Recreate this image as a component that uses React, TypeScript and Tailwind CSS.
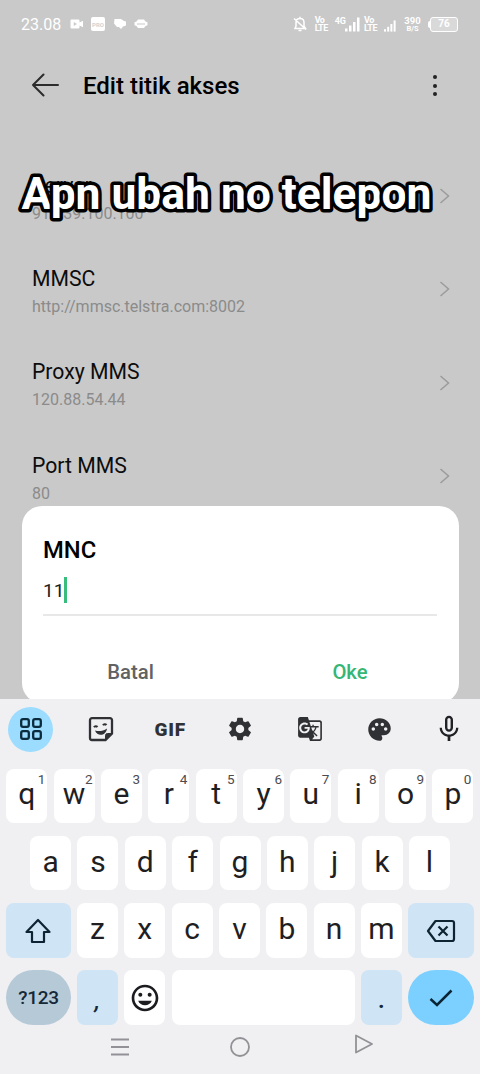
import type { ReactNode } from "react";
import {
  MdGTranslate,
  MdInsertEmoticon,
  MdMicNone,
  MdPalette,
  MdSettings,
} from "react-icons/md";

const settings = [
  { title: "Server", value: "91.139.100.100" },
  { title: "MMSC", value: "http://mmsc.telstra.com:8002" },
  { title: "Proxy MMS", value: "120.88.54.44" },
  { title: "Port MMS", value: "80" },
];

const topRow = ["q", "w", "e", "r", "t", "y", "u", "i", "o", "p"];
const middleRow = ["a", "s", "d", "f", "g", "h", "j", "k", "l"];
const bottomRow = ["z", "x", "c", "v", "b", "n", "m"];

const Signal = ({ className }: { className: string }) => (
  <svg viewBox="0 0 15 15" fill="currentColor" className={className}>
    <rect x="0" y="11.5" width="2.500" height="3" />
    <rect x="4" y="8.5" width="2.500" height="6" />
    <rect x="8" y="5" width="2.500" height="9.5" />
    <rect x="12" y="0.5" width="2.500" height="14" />
  </svg>
);

const VoLte = ({ className }: { className: string }) => (
  <span className={`w-[14px] text-[9px] font-bold leading-[8px] tracking-[-0.5px] ${className}`}>
    Vo
    <br />
    LTE
  </span>
);

const StatusBar = () => (
  <div className="flex h-12 items-center pl-[21px] pr-[22px] text-white">
    <span className="w-[49px] pt-[2px] text-[16px] leading-none">23.08</span>
    <svg viewBox="0 0 14 10" className="h-[10px] w-[14px]" fill="currentColor">
      <path d="M1.5 .5h7a1 1 0 0 1 1 1v2L13 1.8v6.4L9.500 6.500v2a1 1 0 0 1-1 1h-7a1 1 0 0 1-1-1v-7a1 1 0 0 1 1-1z" />
      <path d="M3.800 3v4l3-2z" fill="#c9c9c9" />
    </svg>
    <span className="ml-[7px] flex h-[14px] w-[14px] items-center justify-center rounded-[2px] bg-white text-[6px] font-bold text-[#d2d2d2]">
      PRO
    </span>
    <svg viewBox="0 0 14 12" className="ml-2 h-3 w-[14px]" fill="currentColor">
      <path d="M1.500 1H8l3 2 2 .5v4L10 8.500 8 11 6 9H4L1 5.500z" />
    </svg>
    <svg viewBox="0 0 14 12" className="ml-[7px] h-3 w-[14px]">
      <path d="M4 1.500h6l1.500 2 2 .8v3l-2 .8-1.500 2H4l-1.500-2-2-.8v-3l2-.8z" fill="currentColor" />
      <path d="M3 6h8" stroke="#c9c9c9" />
    </svg>

    <svg viewBox="0 0 14 16" className="ml-auto h-4 w-[14px]" fill="none" stroke="currentColor" strokeWidth="1.500">
      <path d="M2 12.500h10.500L11 10V6.500C11 4 9.500 2.500 7 2.500S3 4 3 6.500V10zM7 .8v1.700M5.500 14.500h3M1 2.500l12 11" />
    </svg>
    <VoLte className="ml-[8px]" />
    <span className="ml-[6px] self-start pt-[17px] text-[9px] font-bold leading-[8px]">4G</span>
    <Signal className="-ml-px h-[15px] w-[15px]" />
    <VoLte className="ml-[4px]" />
    <Signal className="ml-[6px] mt-[4px] h-[12px] w-[12px]" />
    <span className="ml-[8px] w-[17px] text-center text-[9.500px] font-bold leading-[8px]">
      390
      <span className="block text-[7.500px] leading-[7px]">B/S</span>
    </span>
    <div className="ml-[7px] flex items-center">
      <span className="h-[7px] w-[2px] rounded-l-sm bg-white" />
      <span className="flex h-[15px] w-[28px] items-center justify-center rounded-[3px] border border-white bg-white/30 text-[10px] font-bold leading-none">
        76
      </span>
    </div>
  </div>
);

const Header = () => (
  <div className="flex h-[76px] items-center pl-8 pr-[43.500px]">
    <svg viewBox="0 0 28 24" className="-mt-[2px] h-6 w-7" fill="none" stroke="#2c2c2c" strokeWidth="2" strokeLinecap="round" strokeLinejoin="round">
      <path d="M11.500 1.500L1 12l10.500 10.500M1 12h25" />
    </svg>
    <h1 className="ml-[23px] text-[24px] font-medium leading-none text-black">Edit titik akses</h1>
    <div className="ml-auto flex flex-col gap-[4.500px] pb-px">
      <span className="h-1 w-1 rounded-full bg-[#222]" />
      <span className="h-1 w-1 rounded-full bg-[#222]" />
      <span className="h-1 w-1 rounded-full bg-[#222]" />
    </div>
  </div>
);

const SettingsList = () => (
  <div className="pt-[25.500px]">
    {settings.map((item) => (
      <div key={item.title} className="flex h-[93.300px] items-center justify-between pl-8 pr-[29px]">
        <div className="pt-[7px]">
          <p className="text-[21.200px] leading-[28px] text-[#0c0c0c]">{item.title}</p>
          <p className="text-[16px] leading-[28px] text-[#8b8b8b]">{item.value}</p>
        </div>
        <svg viewBox="0 0 12 16" className="h-4 w-3" fill="none" stroke="#9b9b9b" strokeWidth="1.500">
          <path d="M1.500 1l8 7-8 7" />
        </svg>
      </div>
    ))}
  </div>
);

const Dialog = () => (
  <div className="absolute left-[21.500px] top-[505.500px] h-[197px] w-[437px] rounded-[20px] bg-white px-[21.500px] pt-[28px]">
    <h2 className="text-[23.800px] font-medium leading-[32px] text-black">MNC</h2>
    <div className="mt-[8px] flex h-[42px] items-start border-b-2 border-[#e8e8e8]">
      <span className="pt-[5px] text-[19px] leading-[24px] text-[#1c1c1c]">11</span>
      <span className="mt-[3px] h-[26px] w-[3px] bg-[#39bd7c]" />
    </div>
    <div className="flex pt-[42px] text-[20.300px] font-medium leading-[28px]">
      <button className="w-[175px] text-center text-[#626262]">Batal</button>
      <button className="ml-auto w-[174px] text-center text-[#35b675]">Oke</button>
    </div>
  </div>
);

const Caption = () => (
  <svg className="absolute left-0 top-[160px] h-[64px] w-[480px]">
    <text
      x="21.5"
      y="49"
      textLength="410"
      fill="white"
      stroke="black"
      strokeWidth="7"
      strokeLinejoin="round"
      className="font-['Roboto',sans-serif] text-[44.500px] font-bold [paint-order:stroke]"
    >
      Apn ubah no telepon
    </text>
  </svg>
);

const Toolbar = () => (
  <div className="flex h-[60px] items-center justify-between px-2 text-[#303134]">
    <span className="flex h-[45px] w-[45px] items-center justify-center rounded-full bg-[#9bdcff]">
      <svg viewBox="0 0 24 24" className="h-6 w-6" fill="none" stroke="#0b2a3c" strokeWidth="2.300">
        <rect x="2.200" y="2.200" width="7.600" height="7.600" rx="1.800" />
        <rect x="14.200" y="2.200" width="7.600" height="7.600" rx="1.800" />
        <rect x="2.200" y="14.200" width="7.600" height="7.600" rx="1.800" />
        <rect x="14.200" y="14.200" width="7.600" height="7.600" rx="1.800" />
      </svg>
    </span>
    <span className="flex w-[45px] justify-center pl-[2px]">
      <svg viewBox="0 0 26 26" className="h-[26px] w-[26px]" fill="none" stroke="currentColor" strokeWidth="2.300">
        <path d="M4 2.200h18a2 2 0 0 1 2 2v13.300l-6.500 6.500H4a2 2 0 0 1-2-2V4.200a2 2 0 0 1 2-2z" />
        <path d="M17.500 24v-4.500a2 2 0 0 1 2-2H24z" fill="currentColor" strokeWidth="1" />
        <path d="M7 14.500c4 1.200 8 .7 12-2-1 7.500-9.500 8.500-12 2z" fill="currentColor" stroke="none" />
        <path d="M6 11.300c.8-1.500 2.500-1.500 3.500-.3M15 9.300c.8-1.500 2.500-1.500 3.500-.3" strokeWidth="2" />
      </svg>
    </span>
    <span className="flex w-[45px] justify-center text-[19px] font-black leading-none tracking-[0.8px]">GIF</span>
    <span className="flex w-[45px] justify-center">
      <MdSettings className="h-[28px] w-[28px]" />
    </span>
    <span className="flex w-[45px] justify-center">
      <MdGTranslate className="h-[26px] w-[26px]" />
    </span>
    <span className="flex w-[45px] justify-center">
      <MdPalette className="h-[27px] w-[27px]" />
    </span>
    <span className="flex w-[45px] justify-center">
      <MdMicNone className="h-8 w-8 text-[#202124]" />
    </span>
  </div>
);

type KeyProps = {
  children?: ReactNode;
  hint?: number;
  className?: string;
};

const Key = ({ children, hint, className = "w-[41px] bg-white text-[30px] text-[#1f1f23]" }: KeyProps) => (
  <button className={`relative flex h-[54.500px] shrink-0 items-center justify-center rounded-[8px] leading-none ${className}`}>
    <span className="-mt-[3px]">{children}</span>
    {hint !== undefined && (
      <span className="absolute right-[2px] top-[4px] text-[13.500px] leading-none text-[#4b4b50]">{hint}</span>
    )}
  </button>
);

const Keyboard = () => (
  <div className="flex h-[375px] flex-col bg-[#f0eff2]">
    <Toolbar />
    <div className="flex flex-col gap-[12.800px] px-[6.300px] pt-[9.500px]">
      <div className="flex gap-[6.350px]">
        {topRow.map((letter, i) => (
          <Key key={letter} hint={(i + 1) % 10}>
            {letter}
          </Key>
        ))}
      </div>
      <div className="flex justify-center gap-[6.350px]">
        {middleRow.map((letter) => (
          <Key key={letter}>{letter}</Key>
        ))}
      </div>
      <div className="flex gap-[6.350px]">
        <Key className="w-[64.300px] bg-[#cfe4f4]">
          <svg viewBox="0 0 28 26" className="mt-[4px] h-[26px] w-[28px]" fill="none" stroke="#0f2433" strokeWidth="2.200" strokeLinejoin="round">
            <path d="M14 2L2.500 14H8v10h12V14h5.500z" />
          </svg>
        </Key>
        {bottomRow.map((letter) => (
          <Key key={letter}>{letter}</Key>
        ))}
        <Key className="w-[65.500px] bg-[#cfe4f4]">
          <svg viewBox="0 0 30 24" className="mt-[4px] h-6 w-[30px]" fill="none" stroke="#0f2433" strokeWidth="2.200" strokeLinejoin="round">
            <path d="M9.500 2H26a2 2 0 0 1 2 2v16a2 2 0 0 1-2 2H9.500L2 12z" />
            <path d="M12.500 7.500l9 9M21.500 7.500l-9 9" />
          </svg>
        </Key>
      </div>
      <div className="flex gap-[6.350px]">
        <button className="flex h-[55px] w-[64.300px] shrink-0 items-center justify-center rounded-[28px] bg-[#b5c9d7] text-[19px] font-medium tracking-[-0.3px] text-[#142838]">
          ?123
        </button>
        <Key className="w-[41px] bg-[#cfe4f4] pt-[10px] text-[24px] font-medium italic text-[#142838]">,</Key>
        <Key>
          <MdInsertEmoticon className="mt-[4px] h-8 w-8 text-[#1c1c20]" />
        </Key>
        <Key className="w-[183px] bg-white" />
        <Key className="w-[41px] bg-[#cfe4f4] pt-[5px] text-[26px] font-medium text-[#142838]">.</Key>
        <button className="flex h-[55px] w-[65.500px] shrink-0 items-center justify-center rounded-[28px] bg-[#7bd0ff]">
          <svg viewBox="0 0 24 20" className="h-5 w-6" fill="none" stroke="#0c2534" strokeWidth="2.500">
            <path d="M1.500 11l6.500 6L22.500 2.500" />
          </svg>
        </button>
      </div>
    </div>
    <div className="flex justify-between pl-[110px] pr-[107px] pt-[9px] text-[#929296]">
      <svg viewBox="0 0 20 20" className="mt-[3px] h-5 w-5" stroke="currentColor" strokeWidth="2">
        <path d="M1 2.500h18M1 10h18M1 17.500h18" />
      </svg>
      <svg viewBox="0 0 20 20" className="-ml-[3px] mt-[3px] h-5 w-5" fill="none" stroke="currentColor" strokeWidth="1.800">
        <circle cx="10" cy="10" r="9" />
      </svg>
      <svg viewBox="0 0 20 20" className="h-5 w-5" fill="none" stroke="currentColor" strokeWidth="1.800" strokeLinejoin="round">
        <path d="M3 1.500v17L19 10z" />
      </svg>
    </div>
  </div>
);

const App = () => {
  return (
    <div className="w-[480px] overflow-hidden font-['Roboto',sans-serif]">
      <div className="relative h-[699px] overflow-hidden bg-[#c9c9c9]">
        <StatusBar />
        <Header />
        <SettingsList />
        <Dialog />
        <Caption />
      </div>
      <Keyboard />
    </div>
  );
};

export default App;
